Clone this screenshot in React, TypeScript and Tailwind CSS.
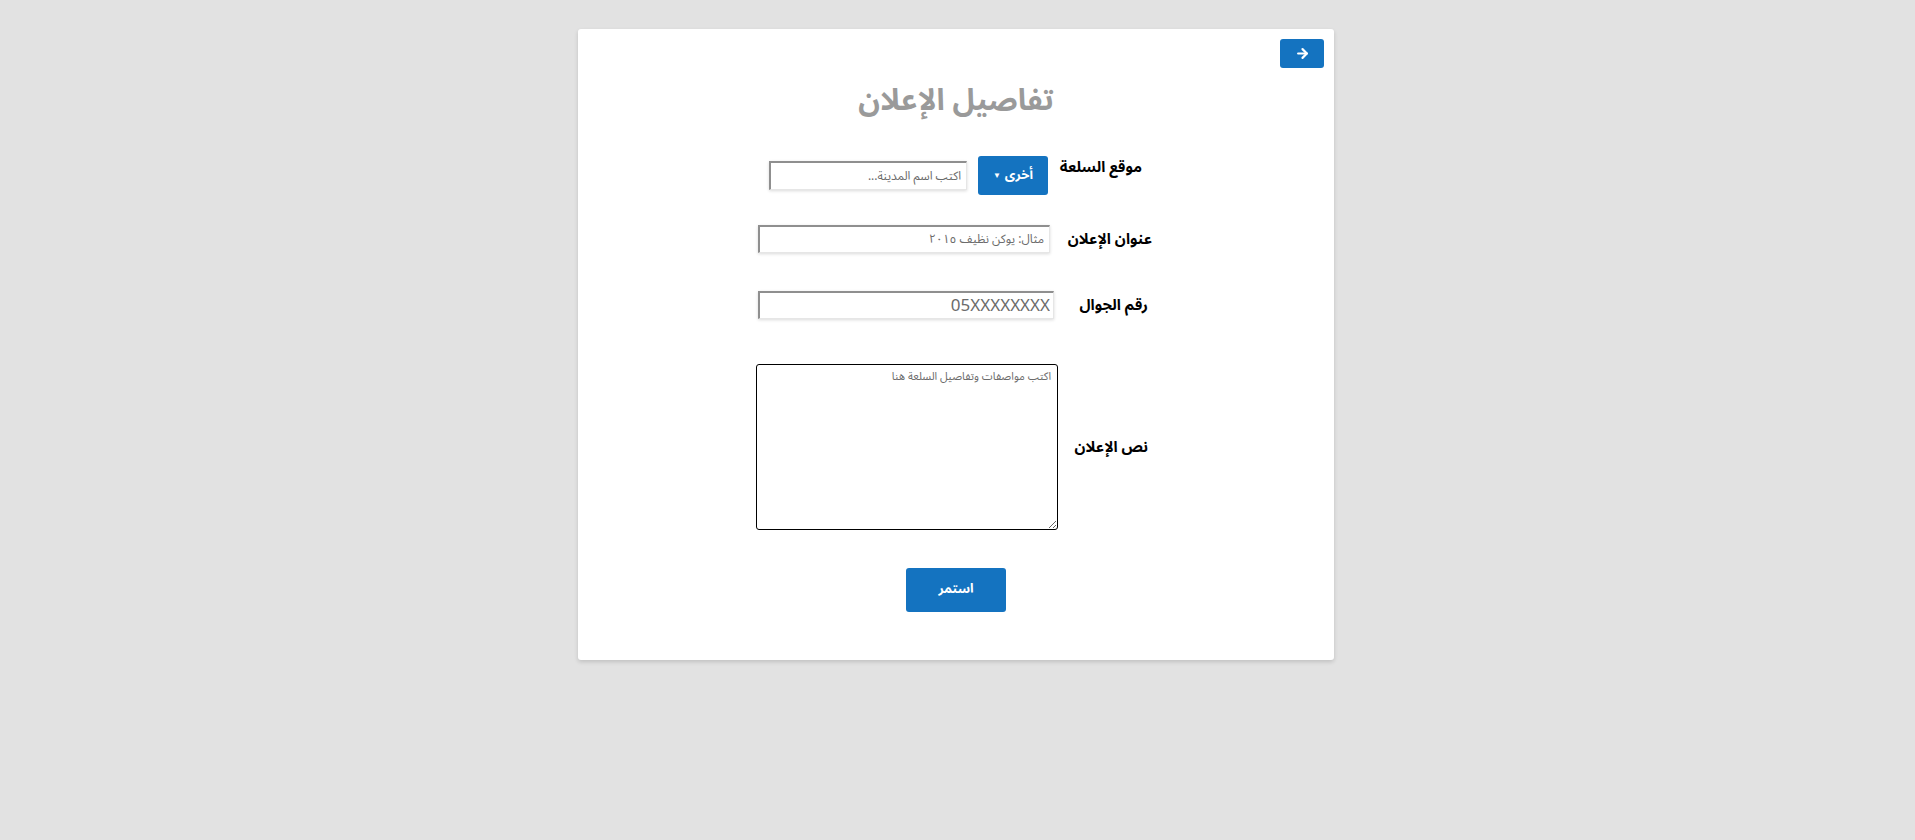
import { ArrowRight } from "lucide-react";

export default function AdDetailsForm() {
  const inputBase =
    "h-[28px] bg-white border-t-2 border-l-2 border-r border-b border-t-[#8f8f8f] border-l-[#8f8f8f] border-r-[#e6e6e6] border-b-[#e6e6e6] shadow-[0_1px_3px_rgba(0,0,0,0.15)] outline-none text-right placeholder:text-[#6b6b6b]";
  const labelBase =
    "shrink-0 whitespace-nowrap text-[15px] leading-[20px] font-bold text-black";

  return (
    <div
      dir="rtl"
      className="min-h-screen bg-[#e2e2e2] pt-[29px] pr-[3px] font-['Noto_Sans_Arabic','Noto_Naskh_Arabic','Liberation_Sans','DejaVu_Sans',sans-serif]"
    >
      <div className="mx-auto w-[756px] h-[631px] bg-white rounded-[3px] shadow-[0_2px_4px_rgba(0,0,0,0.15)] flex flex-col">
        {/* back button */}
        <div className="flex justify-start pt-[10px] pr-[10px]">
          <button className="w-[44px] h-[29px] rounded-[3px] bg-[#1473c0] flex items-center justify-center">
            <ArrowRight className="w-[15px] h-[15px] text-white" strokeWidth={3.5} />
          </button>
        </div>

        <h1 className="mt-[11px] text-center text-[30px] leading-[44px] font-bold text-[#9a9a9a]">
          تفاصيل الإعلان
        </h1>

        <div className="mx-auto w-[400px] mt-[33px] flex flex-col">
          {/* location */}
          <div className="flex items-center pr-[14px]">
            <label className={`${labelBase} w-[94px] self-start mt-[1px]`}>
              موقع السلعة
            </label>
            <button className="w-[70px] h-[39px] rounded-[3px] bg-[#1473c0] text-white text-[13px] font-bold flex items-center justify-center gap-[4px]">
              <span>أخرى</span>
              <span className="text-[8px]">▼</span>
            </button>
            <input
              type="text"
              placeholder="اكتب اسم المدينة..."
              className={`${inputBase} mr-[11px] w-[198px] h-[29px] pr-[5px] text-[12px]`}
            />
          </div>

          {/* title */}
          <div className="flex items-center pr-[4px] mt-[30px]">
            <label className={`${labelBase} w-[102px]`}>عنوان الإعلان</label>
            <input
              type="text"
              placeholder="مثال: يوكن نظيف ٢٠١٥"
              className={`${inputBase} w-[292px] pr-[5px] text-[12px]`}
            />
          </div>

          {/* phone */}
          <div className="flex items-center pr-[8px] mt-[38px]">
            <label className={`${labelBase} w-[94px]`}>رقم الجوال</label>
            <input
              type="tel"
              dir="rtl"
              placeholder="05XXXXXXXX"
              className={`${inputBase} w-[296px] pr-[3px] text-[17px]`}
            />
          </div>

          {/* description */}
          <div className="flex items-center pr-[8px] mt-[45px]">
            <label className={`${labelBase} w-[90px]`}>نص الإعلان</label>
            <textarea
              dir="ltr"
              placeholder="اكتب مواصفات وتفاصيل السلعة هنا"
              className="w-[302px] h-[166px] shrink-0 border border-black rounded-[3px] px-[6px] py-[4px] text-[11px] text-right outline-none placeholder:text-[#6b6b6b]"
            />
          </div>
        </div>

        <div className="flex justify-center mt-[38px]">
          <button className="w-[100px] h-[44px] rounded-[3px] bg-[#1473c0] text-white text-[13px] font-bold">
            استمر
          </button>
        </div>
      </div>
    </div>
  );
}
